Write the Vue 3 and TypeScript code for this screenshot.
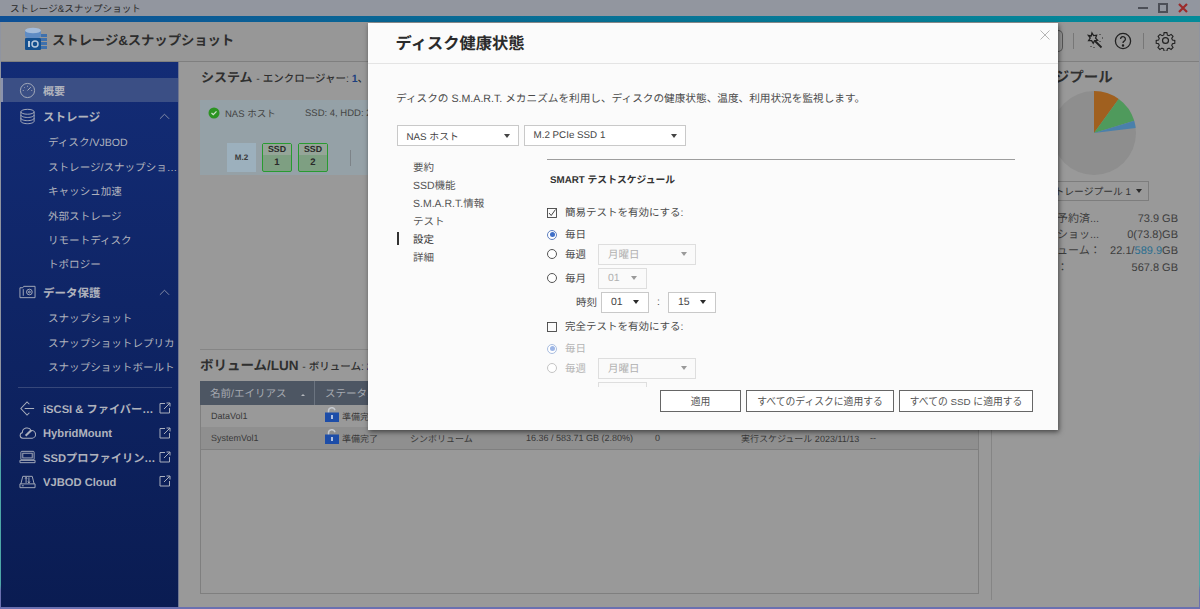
<script setup lang="ts">
interface NavItem {
  label: string
  kind: 'top' | 'sub' | 'link'
  icon?: string
  active?: boolean
  open?: boolean
}

const navGroups: NavItem[] = [
  { label: '概要', kind: 'top', icon: 'gauge', active: true },
  { label: 'ストレージ', kind: 'top', icon: 'db', open: true },
  { label: 'ディスク/VJBOD', kind: 'sub' },
  { label: 'ストレージ/スナップショット', kind: 'sub' },
  { label: 'キャッシュ加速', kind: 'sub' },
  { label: '外部ストレージ', kind: 'sub' },
  { label: 'リモートディスク', kind: 'sub' },
  { label: 'トポロジー', kind: 'sub' },
  { label: 'データ保護', kind: 'top', icon: 'safe', open: true },
  { label: 'スナップショット', kind: 'sub' },
  { label: 'スナップショットレプリカ', kind: 'sub' },
  { label: 'スナップショットボールト', kind: 'sub' }
]

const navLinks: NavItem[] = [
  { label: 'iSCSI & ファイバーチャネル', kind: 'link', icon: 'iscsi' },
  { label: 'HybridMount', kind: 'link', icon: 'cloud' },
  { label: 'SSDプロファイリングツール', kind: 'link', icon: 'ssd' },
  { label: 'VJBOD Cloud', kind: 'link', icon: 'vjbod' }
]

const volumes = [
  { name: 'DataVol1', status: '準備完了', type: 'シンボリューム', size: '5.72 / 5.72 GB (100%)', count: '0', schedule: '実行スケジュール 2023/11/13', extra: '--' },
  { name: 'SystemVol1', status: '準備完了', type: 'シンボリューム', size: '16.36 / 583.71 GB (2.80%)', count: '0', schedule: '実行スケジュール 2023/11/13', extra: '--' }
]

const sections = ['要約', 'SSD機能', 'S.M.A.R.T.情報', 'テスト', '設定', '詳細']
</script>

<template>
  <div class="app">
    <div class="titlebar">
      <span>ストレージ&amp;スナップショット</span>
      <div class="winctl">
        <i class="min"></i>
        <i class="max"></i>
        <svg class="x" viewBox="0 0 10 10" width="10" height="10"><path d="M1 1l8 8M9 1l-8 8" stroke="#9c2a2a" stroke-width="2.200" /></svg>
      </div>
    </div>
    <div class="accent"></div>

    <header class="apphead">
      <svg class="logo" viewBox="0 0 24 24" width="24" height="24">
        <rect x="1" y="2" width="16" height="9" rx="3" fill="#5f8cc4" />
        <ellipse cx="9" cy="3.500" rx="8" ry="2.800" fill="#a4bcda" />
        <path d="M17 7h6v3h-6zM17 11h6v3h-6zM17 15h6v3h-6zM17 19h6v3h-6z" fill="#3f71ad" />
        <rect x="1" y="11" width="16" height="12" rx="1" fill="#14508f" />
        <rect x="4" y="14" width="2" height="6" fill="#b6c8dc" />
        <circle cx="11" cy="17" r="3" fill="none" stroke="#b6c8dc" stroke-width="1.500" />
      </svg>
      <h1>ストレージ&amp;スナップショット</h1>
      <div class="headtools">
        <span class="searchend"></span>
        <span class="vsep"></span>
        <svg viewBox="0 0 20 20" width="20" height="20" fill="none" stroke="#222" stroke-width="1.300">
          <path d="M7 2l1.600 2.600 3-.4-1 2.900 2 2.200-3 .3-1.400 2.700-1.600-2.600-3-.1 1.600-2.600L3.400 4.400l2.800.6z" />
          <path d="M10 10l6.500 6.500" stroke-width="1.800" />
          <path d="M15 3v1M17 7h1M15 10v1M6 15v1M9 16v1" stroke-width="1" stroke-dasharray="1 1" />
        </svg>
        <svg viewBox="0 0 20 20" width="20" height="20" fill="none" stroke="#222" stroke-width="1.300">
          <circle cx="10" cy="10" r="7.600" />
          <path d="M7.600 8a2.400 2.400 0 1 1 3.600 2.100c-.8.500-1.200.9-1.200 1.900" />
          <circle cx="10" cy="14.400" r=".6" fill="#222" />
        </svg>
        <span class="vsep second"></span>
        <svg viewBox="0 0 24 24" width="21" height="21" fill="none" stroke="#222" stroke-width="1.400">
          <circle cx="12" cy="12" r="3.400" />
          <path d="M10.200 2h3.600l.6 3 2.100.9 2.600-1.700 2.500 2.500-1.700 2.600.9 2.100 3 .6v3.600l-3 .6-.9 2.100 1.700 2.600-2.500 2.500-2.600-1.700-2.100.9-.6 3h-3.600l-.6-3-2.100-.9-2.600 1.700-2.500-2.500 1.700-2.600-.9-2.100-3-.6v-3.600l3-.6.9-2.100L2.600 6.700l2.500-2.500 2.600 1.700 2.100-.9z" transform="translate(1.200 1.200) scale(.9)" />
        </svg>
      </div>
    </header>

    <div class="workspace">
      <aside class="sidebar">
        <ul class="nav">
          <li v-for="item in navGroups" :key="item.label" :class="['nav-item', item.kind, { active: item.active }]">
            <span v-if="item.icon" class="nav-icon">
              <svg v-if="item.icon === 'gauge'" viewBox="0 0 18 18" width="17" height="17" fill="none" stroke="#a9aebc" stroke-width="1">
                <circle cx="9" cy="9" r="7.500" />
                <path d="M9 9l3.500-3.500M4 9h1M13 9h1M9 4v1M5.500 5.500l.7.7" />
              </svg>
              <svg v-else-if="item.icon === 'db'" viewBox="0 0 18 18" width="17" height="17" fill="none" stroke="#a9aebc" stroke-width="1">
                <ellipse cx="9" cy="4" rx="7" ry="2.600" />
                <path d="M2 4v10c0 1.400 3.100 2.600 7 2.600s7-1.200 7-2.600V4M2 7.400c0 1.400 3.100 2.600 7 2.600s7-1.200 7-2.600M2 10.800c0 1.400 3.100 2.600 7 2.600s7-1.200 7-2.600" />
              </svg>
              <svg v-else viewBox="0 0 18 14" width="17" height="14" fill="none" stroke="#a9aebc" stroke-width="1">
                <path d="M1 2.500h3l1-1.500h12v12H1zM4.500 4v7" />
                <circle cx="11" cy="7" r="3" />
                <circle cx="11" cy="7" r="1" />
              </svg>
            </span>
            <span class="nav-label">{{ item.label }}</span>
            <svg v-if="item.open" class="chev" viewBox="0 0 12 7" width="11" height="7" fill="none" stroke="#8d94ab" stroke-width="1"><path d="M1 6l5-5 5 5" /></svg>
          </li>
        </ul>
        <div class="nav-sep"></div>
        <ul class="nav">
          <li v-for="item in navLinks" :key="item.label" class="nav-item link">
            <span class="nav-icon">
              <svg v-if="item.icon === 'iscsi'" viewBox="0 0 18 18" width="17" height="17" fill="none" stroke="#a9aebc" stroke-width="1.100">
                <path d="M11 4.500L8.500 2 2 9l6.500 7 2.500-2.500M6 9h10" />
              </svg>
              <svg v-else-if="item.icon === 'cloud'" viewBox="0 0 18 14" width="17" height="14" fill="none" stroke="#a9aebc" stroke-width="1.100">
                <path d="M4 12.500A3 3 0 0 1 3.500 6.600 5 5 0 0 1 13 4.500a4 4 0 0 1 1 8z" />
                <path d="M7 10l6-6" stroke-width="2.200" />
              </svg>
              <svg v-else-if="item.icon === 'ssd'" viewBox="0 0 18 14" width="17" height="14" fill="none" stroke="#a9aebc" stroke-width="1">
                <rect x="2" y="1" width="14" height="9" rx="1" />
                <rect x="4" y="3" width="10" height="5" />
                <path d="M1 10.500h16v2.500H1z" />
              </svg>
              <svg v-else viewBox="0 0 18 14" width="17" height="14" fill="none" stroke="#a9aebc" stroke-width="1">
                <path d="M1 9h16v4H1zM2 9l2-8M16 9l-2-8M4 1h10M7.500 2v6M10.500 2v6M6.500 3.500l1-1.500 1 1.500M9.500 6.500l1 1.500 1-1.500M3 11h2" />
              </svg>
            </span>
            <span class="nav-label">{{ item.label }}</span>
            <svg class="ext" viewBox="0 0 12 12" width="12" height="12" fill="none" stroke="#a9aebc" stroke-width="1">
              <path d="M6 1.500H1v9.500h9.500V6M5 7l6-6M7.500 1H11v3.500" />
            </svg>
          </li>
        </ul>
      </aside>

      <main class="content">
        <div class="left">
          <h2 class="sect-title sys">システム <small>- エンクロージャー: <b>1</b>、ディスク: <b>6</b></small></h2>
          <div class="system">
            <div class="system-top">
              <svg viewBox="0 0 12 12" width="12" height="12"><circle cx="6" cy="6" r="5.500" fill="#2c9422" /><path d="M3.500 6l1.800 1.700 3.200-3.300" fill="none" stroke="#cfe3cc" stroke-width="1.300" /></svg>
              <span class="host">NAS ホスト</span>
              <span class="counts">SSD: 4, HDD: 2</span>
            </div>
            <div class="bays">
              <div class="bay-m2">M.2</div>
              <div class="bay"><span>SSD</span><b>1</b></div>
              <div class="bay"><span>SSD</span><b>2</b></div>
              <i class="bay-sep"></i>
            </div>
          </div>

          <div class="rule"></div>

          <h2 class="sect-title vol">ボリューム/LUN <small>- ボリューム: <b>2</b></small></h2>
          <div class="table">
            <div class="thead">
              <div class="th first">名前/エイリアス<i class="caret"></i></div>
              <div class="th">ステータス</div>
            </div>
            <div v-for="(v, i) in volumes" :key="v.name" :class="['row', { alt: i === 1 }]">
              <span class="c-name">{{ v.name }}</span>
              <svg class="lock" viewBox="0 0 14 15" width="14" height="15">
                <path d="M3.500 6V4a3.300 3.300 0 0 1 6.500-.8" fill="none" stroke="#c6cad0" stroke-width="1.500" />
                <rect x="0" y="5.500" width="14" height="9.500" fill="#1d4da8" />
                <rect x="6.200" y="8" width="1.600" height="4" fill="#d6dcec" />
              </svg>
              <span class="c-status">{{ v.status }}</span>
              <span class="c-type">{{ v.type }}</span>
              <span class="c-size">{{ v.size }}</span>
              <span class="c-count">{{ v.count }}</span>
              <span class="c-sched">{{ v.schedule }}</span>
              <span class="c-extra">{{ v.extra }}</span>
            </div>
          </div>
        </div>

        <div class="right">
          <h2 class="pool-title">ストレージプール</h2>
          <svg class="pie" viewBox="0 0 84 84" width="84" height="84">
            <circle cx="42" cy="42" r="42" fill="#8e8e8e" />
            <path d="M42 42V0A42 42 0 0 1 66.700 8z" fill="#a0601f" />
            <path d="M42 42L66.700 8A42 42 0 0 1 82.200 29.700z" fill="#4f9a5c" />
            <path d="M42 42L82.200 29.700A42 42 0 0 1 83.700 36.900z" fill="#4a80ab" />
          </svg>
          <div class="pool-select"><span>ストレージプール 1</span><i class="tri dark"></i></div>
          <dl class="stats">
            <div><dt>スナップ予約済...</dt><dd>73.9 GB</dd></div>
            <div><dt>スナップショッ...</dt><dd>0(73.8)GB</dd></div>
            <div><dt>最大ボリューム：</dt><dd>22.1/<em>589.9</em>GB</dd></div>
            <div><dt>利用可能：</dt><dd>567.8 GB</dd></div>
          </dl>
        </div>
      </main>
    </div>

    <section class="dialog">
      <div class="dlg-head">
        <h2>ディスク健康状態</h2>
        <svg class="close" viewBox="0 0 10 10" width="10" height="10" fill="none" stroke="#b5b5b5" stroke-width="1"><path d="M.5.500l9 9M9.500.500l-9 9" /></svg>
      </div>
      <p class="dlg-desc">ディスクの S.M.A.R.T. メカニズムを利用し、ディスクの健康状態、温度、利用状況を監視します。</p>
      <div class="dlg-selects">
        <div class="sel w122"><span>NAS ホスト</span><i class="tri"></i></div>
        <div class="sel w162"><span>M.2 PCIe SSD 1</span><i class="tri"></i></div>
      </div>
      <div class="dlg-body">
        <ul class="tabs">
          <li v-for="s in sections" :key="s" :class="{ on: s === '設定' }">{{ s }}</li>
        </ul>
        <div class="pane">
          <h3>SMART テストスケジュール</h3>
          <label class="opt chk first-chk">
            <svg class="cb" viewBox="0 0 10 10" width="10" height="10" fill="none" stroke="#444" stroke-width=".9"><rect x=".5" y=".5" width="9" height="9" /><path d="M2 5l2.200 2.500L8.500 1.500" stroke-width="1" /></svg>
            簡易テストを有効にする:
          </label>
          <label class="opt r1"><i class="radio on"></i>毎日</label>
          <label class="opt r2"><i class="radio"></i>毎週<div class="sel off w98"><span>月曜日</span><i class="tri"></i></div></label>
          <label class="opt r3"><i class="radio"></i>毎月<div class="sel off w50"><span>01</span><i class="tri"></i></div></label>
          <div class="opt r3 time">時刻<div class="sel w49"><span>01</span><i class="tri dark"></i></div><span class="colon">:</span><div class="sel w49"><span>15</span><i class="tri dark"></i></div></div>
          <label class="opt chk second-chk">
            <svg class="cb" viewBox="0 0 10 10" width="10" height="10" fill="none" stroke="#444" stroke-width=".9"><rect x=".5" y=".5" width="9" height="9" /></svg>
            完全テストを有効にする:
          </label>
          <label class="opt r1 dim"><i class="radio on"></i>毎日</label>
          <label class="opt r2 dim"><i class="radio"></i>毎週<div class="sel off w98"><span>月曜日</span><i class="tri"></i></div></label>
          <label class="opt r3 dim"><span class="spacer"></span><div class="sel off w50"><span>01</span><i class="tri"></i></div></label>
        </div>
      </div>
      <div class="dlg-foot">
        <button class="b81">適用</button>
        <button class="b148">すべてのディスクに適用する</button>
        <button class="b134">すべての SSD に適用する</button>
      </div>
    </section>
  </div>
</template>

<style>
html, body { margin: 0; padding: 0; }
</style>

<style scoped>
* { box-sizing: border-box; }
.app {
  position: relative;
  width: 1200px;
  height: 609px;
  overflow: hidden;
  display: flex;
  flex-direction: column;
  padding: 0 1px 2px 1px;
  background: linear-gradient(180deg, #8f94a0 0%, #8f94a0 74%, #4da7a7 76%, #4da7a7 96%, #6a70b0 97%);
  font-family: "Liberation Sans", "Noto Sans CJK JP", sans-serif;
  text-rendering: geometricPrecision;
  color: #333;
}
.titlebar {
  height: 16px;
  flex: none;
  background: #92969f;
  margin: 0 -1px;
  padding: 0 10px;
  display: flex;
  align-items: center;
  justify-content: space-between;
  font-size: 9.600px;
  color: #2a2a2a;
}
.winctl { display: flex; align-items: center; gap: 10px; margin-right: 2px; }
.winctl .min { width: 10px; height: 2px; background: #4c4f57; }
.winctl .max { width: 10px; height: 10px; border: 2px solid #4c4f57; }
.accent {
  height: 6px;
  flex: none;
  margin: 0 -1px;
  background: linear-gradient(90deg, #0d4f95 0%, #086c95 40%, #048b99 100%);
}
.apphead {
  height: 40px;
  flex: none;
  background: #979797;
  border-bottom: 1px solid #7f7f7f;
  display: flex;
  align-items: center;
  padding-left: 23px;
}
.logo { margin-bottom: 5px; }
.apphead h1 { margin: 0 0 6px 4px; font-size: 13.400px; font-weight: 700; color: #2d2d2d; letter-spacing: -.1px; }
.headtools { margin-left: auto; margin-right: 23px; margin-bottom: 2px; display: flex; align-items: center; gap: 8px; }
.headtools .searchend { width: 6px; height: 22px; border: 1px solid #555; border-left: 0; border-radius: 0 5px 5px 0; margin-right: 2px; }
.headtools .vsep { width: 1px; height: 16px; background: #777; margin-right: 3px; }
.headtools .vsep.second { margin: 0 3px 0 2px; }
.workspace { flex: 1; display: flex; min-height: 0; }
.sidebar {
  width: 178px;
  flex: none;
  background: linear-gradient(180deg, #132c76 0%, #0a1c52 100%);
  border-right: 1px solid #6f7690;
  padding-top: 16px;
  color: #b0b3bd;
}
.nav { list-style: none; margin: 0; padding: 0; }
.nav-item { display: flex; align-items: center; height: 24.400px; position: relative; }
.nav-item.top { font-size: 11.500px; font-weight: 700; padding-left: 18px; }
.nav-item.top.active { background: #3b4f85; box-shadow: inset 2px 0 0 #8b93ad; font-size: 11px; margin-bottom: 1.500px; }
.nav-item.sub { font-size: 10.550px; padding-left: 47px; }
.nav-item.top + .nav-item.sub { margin-top: 1.500px; }
.nav-item.sub + .nav-item.top { margin-top: 3.500px; }
.nav-item.link { font-size: 11.200px; font-weight: 700; padding-left: 18px; }
.nav-icon { width: 24px; flex: none; display: flex; align-items: center; }
.nav-label { white-space: nowrap; overflow: hidden; text-overflow: ellipsis; min-width: 0; padding-top: 2px; }
.nav-item.link .nav-label { width: 114px; }
.chev { position: absolute; left: 158px; top: 9px; }
.ext { position: absolute; left: 158px; top: 6px; }
.nav-sep { height: 1px; background: #36477a; margin: 8.500px 6px 8px 17px; }
.content { flex: 1; display: flex; background: #999; min-width: 0; }
.left { width: 779px; margin-left: 21px; flex: none; padding-top: 6px; display: flex; flex-direction: column; }
.sect-title { margin: 0; height: 18px; line-height: 18px; font-size: 14px; font-weight: 700; color: #2f2f2f; white-space: nowrap; }
.sect-title small { font-size: 10.500px; font-weight: 500; }
.sect-title small b { color: #1d3f80; font-weight: 700; }
.sect-title.sys { font-size: 13px; padding-left: 1px; line-height: 20px; }
.sect-title.vol { font-size: 13.500px; margin-top: 7px; }
.system { margin-top: 14px; height: 75px; background: #95a1a7; padding: 7px 8px 2px; }
.system-top { display: flex; align-items: center; height: 12px; font-size: 9.500px; color: #444; }
.host { margin-left: 5px; width: 80px; }
.bays { margin-top: 24px; margin-left: 19px; display: flex; align-items: center; gap: 6px; }
.bay-m2 { width: 29px; height: 29px; background: #9cb0bd; font-size: 8px; font-weight: 700; color: #3c3c3c; display: flex; align-items: center; justify-content: center; }
.bay { width: 30px; height: 29px; border: 1px solid #289b30; border-radius: 2px; display: flex; flex-direction: column; font-size: 8.800px; font-weight: 700; color: #2a2a2a; background: #7e9f82; text-align: center; }
.bay span { height: 11px; line-height: 11px; background: #95a598; }
.bay b { flex: 1; line-height: 16px; font-size: 9.500px; }
.bay-sep { width: 1px; height: 16px; background: #7d8388; margin-left: 16px; }
.rule { height: 1px; background: #858585; margin-top: 174px; }
.table { margin-top: 6px; height: 213px; border: 1px solid #7f7f7f; border-top: 0; font-size: 9px; color: #393939; }
.thead { height: 24px; background: #4d5663; display: flex; margin: 0 -1px; color: #a7abb2; font-size: 10.500px; align-items: center; }
.th { height: 100%; display: flex; align-items: center; padding-left: 10px; position: relative; }
.th.first { width: 115px; border-right: 1px solid #6b7480; }
.caret { position: absolute; right: 9px; top: 11px; border: 2px solid transparent; border-bottom: 2px solid #b4b7bd; }
.row { height: 22px; display: flex; align-items: center; background: #999; border-bottom: 0; position: relative; }
.row.alt { height: 23px; background: #8f8f8f; border-bottom: 1px solid #7f7f7f; }
.c-name { width: 124px; padding-left: 10px; flex: none; }
.lock { flex: none; margin-top: -3px; }
.c-status { margin-left: 3px; width: 68px; flex: none; }
.c-type { width: 116px; flex: none; }
.c-size { width: 129px; flex: none; }
.c-count { width: 86px; flex: none; }
.c-sched { width: 129px; flex: none; white-space: nowrap; }
.right { flex: 1; margin-left: 12px; margin-bottom: 7px; border-left: 1px solid #858585; padding-left: 21px; min-width: 0; position: relative; }
.pool-title { margin: 7px 0 0 -21px; padding-left: 5px; height: 18px; line-height: 18px; font-size: 14.500px; font-weight: 700; color: #2f2f2f; white-space: nowrap; }
.pie { display: block; margin: 4px 0 0 39px; }
.pool-select { margin: 6px 0 0 20px; width: 116px; height: 20px; border: 1px solid #7d7d7d; font-size: 9.800px; color: #333; display: flex; align-items: center; justify-content: flex-end; padding-right: 6px; gap: 5px; }
.stats { margin: 9.500px 0 0; width: 165px; font-size: 11px; color: #3d3d3d; }
.stats div { display: flex; justify-content: space-between; height: 16.400px; line-height: 16.400px; }
.stats dt { white-space: nowrap; }
.stats dd { margin: 0; white-space: nowrap; }
.stats em { font-style: normal; color: #2a6e90; }
.tri { width: 0; height: 0; border: 3.500px solid transparent; border-top: 4px solid #555; border-bottom: 0; flex: none; }
.tri.dark { border-top-color: #2a2a2a; }

.dialog {
  position: absolute;
  left: 368px;
  top: 23px;
  width: 690px;
  height: 407px;
  background: #fbfbfb;
  box-shadow: 1px 2px 5px rgba(0, 0, 0, .55);
  display: flex;
  flex-direction: column;
  color: #444;
}
.dlg-head { height: 41px; flex: none; border-bottom: 1px solid #e4e4e4; padding: 0 0 2px 27.500px; position: relative; display: flex; align-items: center; }
.dlg-head h2 { margin: 0; font-size: 16.300px; font-weight: 700; color: #2b2b2b; }
.close { position: absolute; left: 672px; top: 7px; }
.dlg-desc { margin: 28px 0 0 28px; font-size: 10.650px; line-height: 14px; height: 14px; white-space: nowrap; color: #4a4a4a; }
.dlg-selects { margin: 19px 0 0 29px; display: flex; gap: 5px; }
.sel { height: 21px; background: #fff; border: 1px solid #c9c9c9; display: flex; align-items: center; justify-content: space-between; padding: 0 8px 0 9px; font-size: 10.500px; color: #444; flex: none; }
.w122 { width: 122px; }
.w162 { width: 162px; padding-right: 8px; }
.dlg-selects .sel { font-size: 9.800px; padding-left: 8.500px; }
.w98 { width: 98px; }
.w50 { width: 49px; padding-right: 9px; }
.w49 { width: 48px; padding-right: 9px; }
.sel.off { color: #b0b0b0; border-color: #dedede; background: #fafafa; }
.sel.off .tri { border-top-color: #9a9a9a; }
.dlg-selects .tri { border-top-color: #444; }
.dlg-body { margin-top: 13px; display: flex; flex: none; height: 228px; overflow: hidden; }
.tabs { list-style: none; margin: 0; padding: 0 0 0 45px; width: 179px; flex: none; font-size: 10.500px; color: #555; }
.tabs li { height: 18px; line-height: 18px; position: relative; white-space: nowrap; }
.tabs li.on { color: #333; }
.tabs li.on::before { content: ""; position: absolute; left: -16px; top: 1px; width: 1.500px; height: 13px; background: #333; }
.pane { width: 468px; flex: none; border-top: 1px solid #9d9d9d; }
.pane h3 { margin: 12px 0 0 3px; height: 18px; line-height: 18px; font-size: 9.800px; font-weight: 700; color: #333; }
.opt { display: flex; align-items: center; font-size: 10.500px; color: #4a4a4a; height: 18px; white-space: nowrap; }
.opt .cb { margin-right: 8px; flex: none; }
.first-chk { margin-top: 13.500px; }
.second-chk { margin-top: 5px; }
.r1 { margin-top: 3px; }
.first-chk + .r1, .second-chk + .r1 { margin-top: 4px; }
.r2 { margin-top: 0; height: 21px; }
.r3 { margin-top: 3px; height: 21px; }
.radio { width: 10px; height: 10px; border: 1px solid #555; border-radius: 50%; margin-right: 8px; flex: none; background: #fff; position: relative; }
.radio.on { border-color: #5f80c0; }
.radio.on::after { content: ""; position: absolute; inset: 1.500px; border-radius: 50%; background: #3f6fc8; }
.opt .sel { margin-left: 12px; }
.time { padding-left: 29px; }
.time .sel { margin-left: 4px; }
.colon { margin: 0 6px 0 8px; width: 5px; }
.time .colon + .sel { margin-left: 0; }
.dim { color: #b4b4b4; }
.dim .radio { border-color: #c4c4c4; }
.dim .radio.on { border-color: #a9bde0; }
.dim .radio.on::after { background: #9db6e6; }
.spacer { width: 39px; flex: none; }
.dlg-foot { margin-top: 3px; padding-right: 25px; display: flex; justify-content: flex-end; gap: 5px; }
.dlg-foot button { height: 22px; background: #fff; border: 1px solid #666; padding: 0; font: inherit; font-size: 9.800px; color: #555; }
.b81 { width: 81px; }
.b148 { width: 148px; }
.b134 { width: 134px; }
</style>
